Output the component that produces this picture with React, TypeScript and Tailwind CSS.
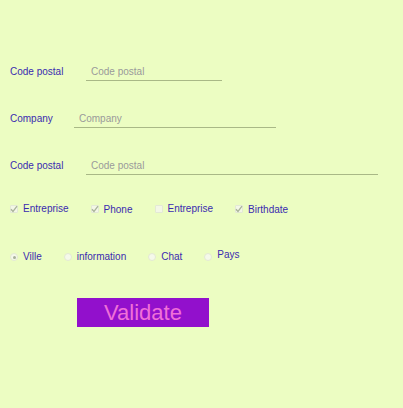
import React from 'react';

const labelCls = 'text-[10px] leading-none text-[#3a2bb0]';

function TextRow({ label, labelWidth, inputWidth, className }: { label: string; labelWidth: string; inputWidth: string; className?: string }) {
  return (
    <div className={`flex items-center pl-[10px] ${className ?? ''}`}>
      <span className={`${labelCls} ${labelWidth}`}>{label}</span>
      <input
        type="text"
        placeholder={label}
        className={`h-[19px] ${inputWidth} border-b border-[#a9b886] bg-transparent pl-[5px] text-[10px] text-[#555] placeholder-[#9a9a9a] outline-none`}
      />
    </div>
  );
}

function Check({ label, checked, shift }: { label: string; checked: boolean; shift?: string }) {
  return (
    <label className="flex items-center gap-[5px]">
      <span className="relative flex h-[8px] w-[8px] items-center justify-center rounded-[1px] border border-[#e3e9d5] bg-[#f3f7e6]">
        {checked && (
          <svg viewBox="0 0 8 8" className="absolute h-[8px] w-[8px]">
            <path d="M1 4.2 L3 6.4 L7 1.2" fill="none" stroke="#a9b39a" strokeWidth="1.3" />
          </svg>
        )}
      </span>
      <span className={`${labelCls} ${shift ?? ''}`}>{label}</span>
    </label>
  );
}

function Radio({ label, checked, shift }: { label: string; checked: boolean; shift?: string }) {
  return (
    <label className="flex items-center gap-[5px]">
      <span className="flex h-[8px] w-[8px] items-center justify-center rounded-full border border-[#e3e9d3] bg-[#f5f9ea]">
        {checked && <span className="h-[3px] w-[3px] rounded-full bg-[#a8b09a]" />}
      </span>
      <span className={`${labelCls} ${shift ?? ''}`}>{label}</span>
    </label>
  );
}

export default function App() {
  return (
    <div className="h-[408px] w-[403px] overflow-hidden bg-[#ecfdc2] pt-[62px]" style={{ fontFamily: '"Liberation Sans", Arial, sans-serif' }}>
      <TextRow label="Code postal" labelWidth="w-[76px]" inputWidth="w-[136px]" />
      <TextRow label="Company" labelWidth="w-[64px]" inputWidth="w-[202px]" className="mt-[28px]" />
      <TextRow label="Code postal" labelWidth="w-[76px]" inputWidth="w-[292px]" className="mt-[28px]" />

      <div className="mt-[27px] flex h-[14px] items-center gap-[22px] pl-[10px]">
        <Check label="Entreprise" checked />
        <Check label="Phone" checked shift="translate-y-[1px]" />
        <Check label="Entreprise" checked={false} />
        <Check label="Birthdate" checked shift="translate-y-[1px]" />
      </div>

      <div className="mt-[34px] flex h-[14px] items-center gap-[22px] pl-[10px]">
        <Radio label="Ville" checked />
        <Radio label="information" checked={false} />
        <Radio label="Chat" checked={false} />
        <Radio label="Pays" checked={false} shift="-translate-y-[2px]" />
      </div>

      <div className="mt-[34px] pl-[77px]">
        <button className="flex h-[29px] w-[132px] items-center justify-center bg-[#9210cc] text-[22px] leading-none text-[#f070d8]">
          Validate
        </button>
      </div>
    </div>
  );
}
